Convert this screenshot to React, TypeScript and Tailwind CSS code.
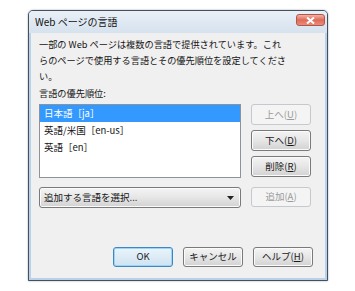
const font = { fontFamily: '"Noto Sans CJK JP", "Noto Sans", sans-serif' }

function Btn({ label, u, rest = ')', disabled = false, primary = false, className = '' }: { label: string; u?: string; rest?: string; disabled?: boolean; primary?: boolean; className?: string }) {
  const base = 'flex items-center justify-center rounded-[3px] border text-[9.5px] leading-none'
  const tone = disabled
    ? 'border-[#c5c8cc] bg-[#f4f4f4] text-[#9a9a9a]'
    : primary
      ? 'border-[#3c88c4] bg-gradient-to-b from-[#eaf4fb] to-[#cfe3f1] text-[#1a1a1a] shadow-[inset_0_0_0_1px_#9fd3f2]'
      : 'border-[#7a7a7a] bg-gradient-to-b from-[#f4f4f4] via-[#e6e6e6] to-[#d2d2d2] text-[#1a1a1a] shadow-[inset_0_0_0_1px_#fbfbfb]'
  return (
    <div className={`${base} ${tone} ${className}`}>
      <span>{label}</span>
      {u && (
        <span>
          (<span className="underline">{u}</span>{rest}
        </span>
      )}
    </div>
  )
}

export default function App() {
  const items = ['日本語［ja］', '英語/米国［en-us］', '英語［en］']
  return (
    <div className="w-[355px] h-[291px] bg-white pt-[10px] pl-[28px]" style={font}>
      <div className="w-[300px] h-[271px] flex flex-col rounded-t-[5px] border border-[#45505c] bg-[#b9d1ea] shadow-[0_0_2px_#9aa5b0]">
        {/* title bar */}
        <div className="h-[22px] flex items-start justify-between rounded-t-[4px] bg-gradient-to-b from-[#e9f0f7] to-[#d6e2ee] pl-[6px] pr-[2px]">
          <span className="mt-[6px] text-[10px] leading-none text-[#111]">Web ページの言語</span>
          <div className="mt-[3px] w-[29px] h-[12px] flex items-center justify-center rounded-[3px] border border-[#b0574a] bg-gradient-to-b from-[#f0b2a6] via-[#e06a58] to-[#e88d7c]">
            <svg width="9" height="7" viewBox="0 0 9 7">
              <path d="M1 0.5 L8 6.5 M8 0.5 L1 6.5" stroke="#ffffff" strokeWidth="2" />
            </svg>
          </div>
        </div>

        {/* body */}
        <div className="flex-1 mx-[2px] mb-[2px] bg-[#f0f0f0] pl-[8px] pr-[12px] pt-[3px] text-[9.2px] text-[#141414]">
          <p className="leading-[16px] whitespace-nowrap">
            一部の Web ページは複数の言語で提供されています。これ<br />
            らのページで使用する言語とその優先順位を設定してくださ<br />
            い。
          </p>
          <p className="leading-[16px] mt-[1px]">言語の優先順位:</p>

          <div className="mt-[3px] flex gap-[10px]">
            <div className="w-[202px] h-[74px] border border-[#8e9399] bg-white">
              {items.map((it, i) => (
                <div
                  key={it}
                  className={`h-[17px] flex items-center pl-[4px] text-[9.5px] ${i === 0 ? 'bg-[#3399ff] text-white' : 'text-[#141414]'}`}
                >
                  {it}
                </div>
              ))}
            </div>
            <div className="flex flex-col gap-[5px]">
              <Btn label="上へ" u="U" disabled className="w-[60px] h-[21px]" />
              <Btn label="下へ" u="D" className="w-[60px] h-[21px]" />
              <Btn label="削除" u="R" className="w-[60px] h-[21px]" />
            </div>
          </div>

          <div className="mt-[9px] flex gap-[10px]">
            <div className="w-[202px] h-[21px] flex items-center justify-between rounded-[3px] border border-[#7a7a7a] bg-gradient-to-b from-[#f4f4f4] via-[#e6e6e6] to-[#d2d2d2] pl-[4px] pr-[6px] shadow-[inset_0_0_0_1px_#fbfbfb]">
              <span className="text-[9.5px] text-[#141414]">追加する言語を選択...</span>
              <svg width="7" height="4" viewBox="0 0 7 4">
                <path d="M0 0 H7 L3.5 4 Z" fill="#222" />
              </svg>
            </div>
            <Btn label="追加" u="A" disabled className="w-[60px] h-[20px]" />
          </div>

          <div className="mt-[39px] flex justify-end gap-[10px]">
            <Btn label="OK" primary className="w-[60px] h-[20px]" />
            <Btn label="キャンセル" className="w-[60px] h-[20px]" />
            <Btn label="ヘルプ" u="H" className="w-[60px] h-[20px]" />
          </div>
        </div>
      </div>
    </div>
  )
}
